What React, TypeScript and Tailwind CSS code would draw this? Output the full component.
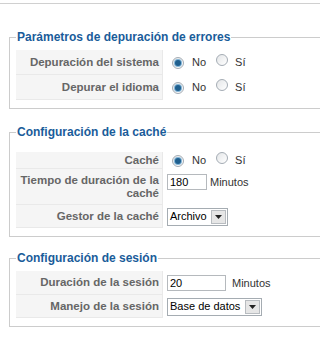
import React from 'react';

const font = { fontFamily: '"Liberation Sans", Arial, sans-serif' };

const Radio: React.FC<{ checked?: boolean }> = ({ checked }) => (
  <span className="inline-flex h-[12px] w-[12px] items-center justify-center rounded-full border border-[#a4acb4] bg-gradient-to-br from-[#e4e6e8] to-[#ffffff]">
    {checked && <span className="h-[6px] w-[6px] rounded-full bg-[#1f5f8e] ring-1 ring-[#7fb3d6]" />}
  </span>
);

const NoSi: React.FC = () => (
  <div className="flex items-center pl-[5px] text-[11px] text-[#333]">
    <Radio checked />
    <span className="ml-[8px]">No</span>
    <span className="ml-[10px]"><Radio /></span>
    <span className="ml-[7px]">Sí</span>
  </div>
);

const Select: React.FC<{ value: string; width: string }> = ({ value, width }) => (
  <div className={`flex h-[18px] items-center border border-[#a5acb2] bg-white ${width}`}>
    <span className="flex-1 pl-[2px] text-[11px] text-black">{value}</span>
    <span className="mr-[1px] flex h-[14px] w-[15px] items-center justify-center border border-[#b8bcc0] bg-[#e6e6e6]">
      <svg width="7" height="4" viewBox="0 0 7 4"><path d="M0 0h7L3.5 4z" fill="#222" /></svg>
    </span>
  </div>
);

const Input: React.FC<{ value: string; width: string }> = ({ value, width }) => (
  <div className={`flex h-[16px] items-center border border-[#b5b9bd] bg-white pl-[2px] text-[11px] text-black ${width}`}>
    {value}
  </div>
);

type Row = { label: React.ReactNode; h: string; top?: boolean; control: React.ReactNode };

const Section: React.FC<{ title: string; rows: Row[]; className: string }> = ({ title, rows, className }) => (
  <fieldset className={`ml-[9px] w-[340px] border border-[#cccccc] px-[6px] pb-[8px] ${className}`}>
    <legend className="px-[1px] text-[12px] font-bold leading-[15px] text-[#1a5c9a]">{title}</legend>
    {rows.map((r, i) => (
      <div key={i} className={`flex ${r.h}`}>
        <div className="flex w-[147px] shrink-0 items-center justify-end border-r border-b border-[#e9e9e9] bg-[#f5f5f5] pr-[3px] text-right text-[11.5px] font-bold leading-[13px] text-[#666]">
          <span>{r.label}</span>
        </div>
        <div className={`flex flex-1 pl-[4px] ${r.top ? 'items-start pt-[5px]' : 'items-center'}`}>{r.control}</div>
      </div>
    ))}
  </fieldset>
);

export default function App() {
  return (
    <div className="h-[349px] w-[320px] overflow-hidden bg-white" style={font}>
      <div className="mt-[3px] border-t border-[#d0d0d0]" />
      <Section
        title="Parámetros de depuración de errores"
        className="mt-[26px] pt-[5px]"
        rows={[
          { label: 'Depuración del sistema', h: 'h-[25px]', control: <NoSi /> },
          { label: 'Depurar el idioma', h: 'h-[25px]', control: <NoSi /> },
        ]}
      />
      <Section
        title="Configuración de la caché"
        className="mt-[16px] pt-[12px]"
        rows={[
          { label: 'Caché', h: 'h-[17px]', control: <NoSi /> },
          {
            label: (
              <>
                Tiempo de duración de la
                <br />
                caché
              </>
            ),
            h: 'h-[36px]',
            top: true,
            control: (
              <div className="flex items-center">
                <Input value="180" width="w-[40px]" />
                <span className="ml-[3px] text-[11px] text-[#333]">Minutos</span>
              </div>
            ),
          },
          { label: 'Gestor de la caché', h: 'h-[23px]', control: <Select value="Archivo" width="w-[61px]" /> },
        ]}
      />
      <Section
        title="Configuración de sesión"
        className="mt-[14px] pt-[5px]"
        rows={[
          {
            label: 'Duración de la sesión',
            h: 'h-[24px]',
            control: (
              <div className="flex items-center">
                <Input value="20" width="w-[59px]" />
                <span className="ml-[6px] text-[11px] text-[#333]">Minutos</span>
              </div>
            ),
          },
          { label: 'Manejo de la sesión', h: 'h-[23px]', control: <Select value="Base de datos" width="w-[95px]" /> },
        ]}
      />
    </div>
  );
}
